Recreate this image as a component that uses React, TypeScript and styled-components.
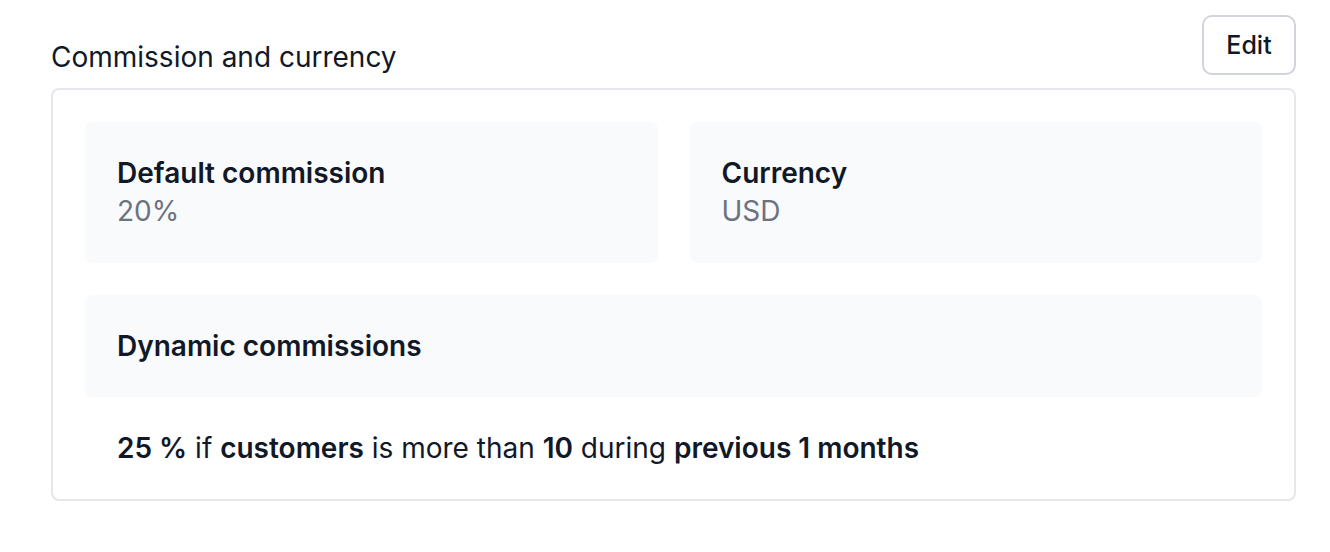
import React from 'react';
import styled, { createGlobalStyle } from 'styled-components';

const GlobalStyle = createGlobalStyle`
  body {
    margin: 0;
    background: #ffffff;
    font-family: Inter, "Noto Sans", "Liberation Sans", sans-serif;
    color: #111827;
  }
`;

const Page = styled.div`
  padding: 15px 34px 0 51px;
`;

const Header = styled.div`
  display: flex;
  justify-content: space-between;
  align-items: flex-end;
  margin-bottom: 13px;
`;

const Title = styled.h2`
  margin: 0;
  font-size: 28px;
  line-height: 36px;
  font-weight: 400;
  color: #111827;
`;

const EditButton = styled.button`
  height: 60px;
  width: 94px;
  padding: 0;
  border: 2px solid #d1d5db;
  border-radius: 10px;
  background: #ffffff;
  font-family: inherit;
  font-size: 25px;
  font-weight: 500;
  color: #111827;
  cursor: pointer;
`;

const Card = styled.div`
  border: 2px solid #e5e7eb;
  border-radius: 8px;
  padding: 32px;
  display: flex;
  flex-direction: column;
  gap: 32px;
`;

const Grid = styled.div`
  display: grid;
  grid-template-columns: 1fr 1fr;
  gap: 32px;
`;

const Tile = styled.div`
  background: #f9fafb;
  border-radius: 8px;
  padding: 32px;
`;

const Label = styled.div`
  font-size: 28px;
  line-height: 38px;
  font-weight: 600;
  color: #111827;
`;

const Value = styled.div`
  font-size: 28px;
  line-height: 39px;
  font-weight: 400;
  color: #6b7280;
`;

const Rule = styled.p`
  margin: 0;
  padding: 0 32px;
  font-size: 28px;
  line-height: 38px;
  color: #111827;

  strong {
    font-weight: 600;
  }
`;

const App: React.FC = () => {
  return (
    <>
      <GlobalStyle />
      <Page>
        <Header>
          <Title>Commission and currency</Title>
          <EditButton>Edit</EditButton>
        </Header>
        <Card>
          <Grid>
            <Tile>
              <Label>Default commission</Label>
              <Value>20%</Value>
            </Tile>
            <Tile>
              <Label>Currency</Label>
              <Value>USD</Value>
            </Tile>
          </Grid>
          <Tile>
            <Label>Dynamic commissions</Label>
          </Tile>
          <Rule>
            <strong>25 %</strong> if <strong>customers</strong> is more than{' '}
            <strong>10</strong> during <strong>previous 1 months</strong>
          </Rule>
        </Card>
      </Page>
    </>
  );
};

export default App;
